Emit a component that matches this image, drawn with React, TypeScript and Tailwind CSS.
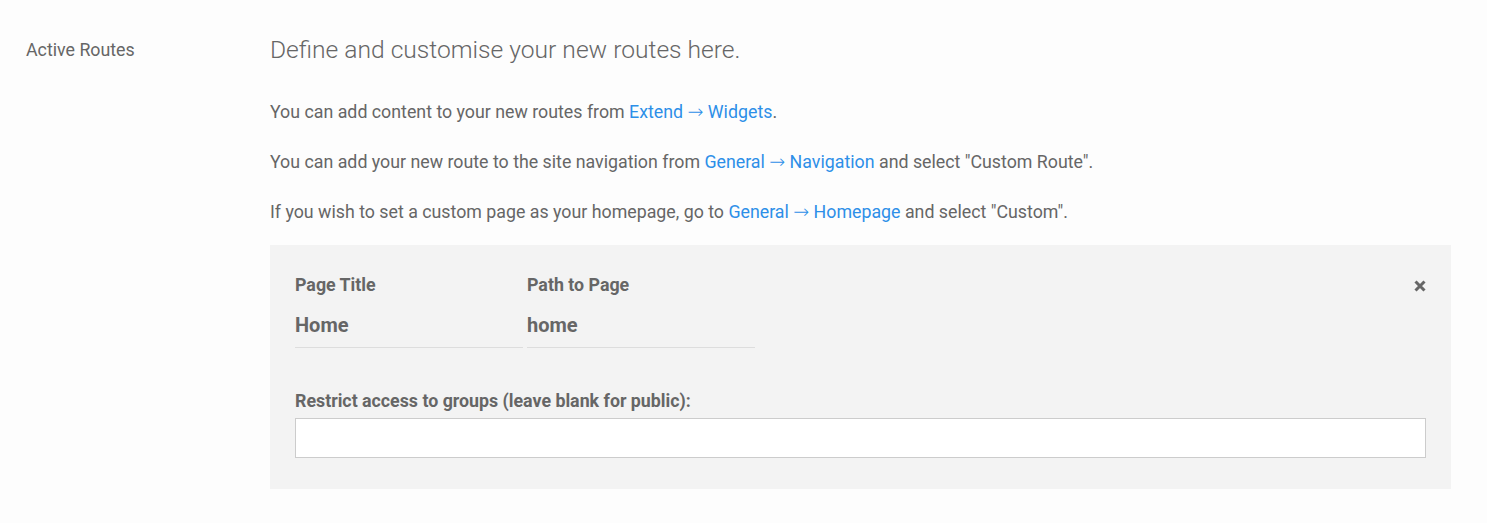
import React from "react";

const Arrow = () => <span className="font-['DejaVu_Sans',sans-serif] font-extralight text-[19px] leading-[0px]">→</span>;

export default function App() {
  const link = "text-[#2d8fe8]";
  return (
    <div className="min-h-[523px] w-full bg-[#fdfdfd] text-[#666] font-['Roboto',sans-serif]">
      <div className="flex pl-[26px] pr-[36px] pt-[37px]">
        <div className="w-[244px] shrink-0 text-[17.8px] leading-[24px] pt-[1px]">Active Routes</div>
        <div className="flex-1">
          <h2 className="text-[24.6px] font-light leading-[26px] text-[#666]">Define and customise your new routes here.</h2>
          <p className="mt-[38px] text-[17.8px] leading-[22px]">
            You can add content to your new routes from <span className={link}>Extend <Arrow /> Widgets</span>.
          </p>
          <p className="mt-[28px] text-[17.8px] leading-[22px]">
            You can add your new route to the site navigation from <span className={link}>General <Arrow /> Navigation</span> and select "Custom Route".
          </p>
          <p className="mt-[28px] text-[17.8px] leading-[22px]">
            If you wish to set a custom page as your homepage, go to <span className={link}>General <Arrow /> Homepage</span> and select "Custom".
          </p>
          <div className="mt-[22px] bg-[#f3f3f3] px-[25px] pt-[29px] pb-[31px]">
            <div className="flex items-start">
              <div className="flex gap-[4px]">
                <div className="w-[228px]">
                  <div className="text-[17.8px] font-bold leading-[22px]">Page Title</div>
                  <div className="mt-[16px] text-[20px] font-bold leading-[26px] pb-[9px] border-b border-[#ddd]">Home</div>
                </div>
                <div className="w-[228px]">
                  <div className="text-[17.8px] font-bold leading-[22px]">Path to Page</div>
                  <div className="mt-[16px] text-[20px] font-bold leading-[26px] pb-[9px] border-b border-[#ddd]">home</div>
                </div>
              </div>
              <div className="ml-auto pt-[6px]">
                <svg width="12" height="12" viewBox="0 0 12 12" className="block">
                  <path d="M1.5 1.5 L10.5 10.5 M10.5 1.5 L1.5 10.5" stroke="#666" strokeWidth="3" strokeLinecap="butt" />
                </svg>
              </div>
            </div>
            <div className="mt-[42px] text-[17.8px] font-bold leading-[22px]">Restrict access to groups (leave blank for public):</div>
            <div className="mt-[6px] h-[40px] w-[1131px] bg-white border border-[#ccc]"></div>
          </div>
        </div>
      </div>
    </div>
  );
}
